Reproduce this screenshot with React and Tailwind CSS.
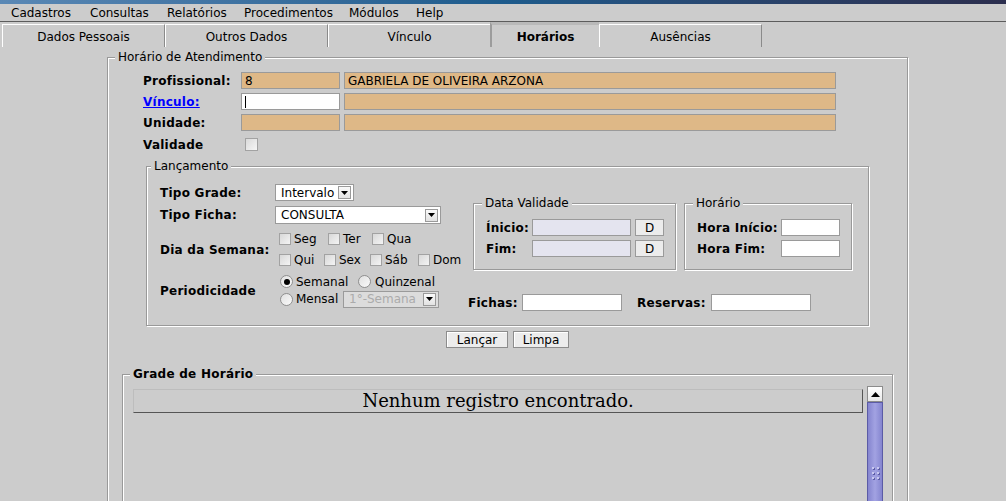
import React from "react";

const Etched = ({ className = "", legend, legendBold, legendLeft = "left-[7px]", children }) => (
  <div className={"relative border border-[#999999] shadow-[inset_1px_1px_0_#ffffff,1px_1px_0_#ffffff] " + className}>
    {legend && (
      <span className={"absolute top-[-8px] px-[3px] bg-[#cccccc] leading-[14px] whitespace-nowrap " + legendLeft + (legendBold ? " font-bold tracking-[0.25px]" : "")}>
        {legend}
      </span>
    )}
    {children}
  </div>
);

const Tan = ({ w, children }) => (
  <div className={"h-[17px] bg-[#deb887] border border-[#9a9a9a] flex items-center pl-[3px] " + w}>{children}</div>
);

const Field = ({ w, bg = "bg-white", children }) => (
  <div className={"h-[17px] border border-[#9a9a9a] flex items-center pl-[3px] " + w + " " + bg}>{children}</div>
);

const Check = () => (
  <div className="w-[12px] h-[12px] border border-[#a2a2a2] bg-gradient-to-br from-[#d8d8d8] to-[#f4f4f4] shrink-0" />
);

const Radio = ({ on }) => (
  <div className="w-[13px] h-[13px] rounded-full border border-[#8f8f8f] bg-gradient-to-br from-[#e0e0e0] to-[#fafafa] flex items-center justify-center shrink-0">
    {on && <div className="w-[6px] h-[6px] rounded-full bg-black" />}
  </div>
);

const Arrow = () => (
  <div className="w-[13px] h-[13px] border border-[#9a9a9a] bg-gradient-to-b from-[#fafafa] to-[#e2e2e2] flex items-center justify-center shrink-0">
    <svg width="7" height="4" viewBox="0 0 7 4"><path d="M0 0H7L3.5 4Z" fill="#000" /></svg>
  </div>
);

const Combo = ({ w, h = "h-[17px]", text, disabled }) => (
  <div className={"border border-[#9a9a9a] flex items-center justify-between pl-[5px] pr-[2px] " + w + " " + h + (disabled ? " bg-[#dcdcdc] text-[#ababab]" : " bg-white")}>
    <span>{text}</span>
    <Arrow />
  </div>
);

const CB = ({ w, label }) => (
  <div className={"flex items-center " + w}>
    <Check />
    <span className="ml-[3px]">{label}</span>
  </div>
);

const Btn = ({ w, children }) => (
  <div className={"h-[17px] border border-[#8c8c8c] bg-[#ececec] shadow-[inset_1px_1px_0_#ffffff] flex items-center justify-center " + w}>{children}</div>
);

export default function App() {
  const menu = [
    ["Cadastros", "w-[79px]"],
    ["Consultas", "w-[77px]"],
    ["Relatórios", "w-[77px]"],
    ["Procedimentos", "w-[105px]"],
    ["Módulos", "w-[67px]"],
    ["Help", "w-[40px]"],
  ];
  const B = "font-bold tracking-[0.25px]";
  return (
    <div className="w-[1006px] h-[501px] overflow-hidden bg-[#cccccc] text-black font-['DejaVu_Sans',sans-serif] text-[12px] leading-[14px]">
      <div className="h-[4px] bg-gradient-to-r from-[#5a88b5] via-[#1d5b8c] to-[#2b2e4e]" />
      <div className="h-[18px] flex items-center pl-[11px] border-b border-[#5c5c5c]">
        {menu.map(([t, w]) => (
          <div key={t} className={w}>{t}</div>
        ))}
      </div>
      {/* tabs */}
      <div className="h-[25px] flex items-end pl-[2px]">
        <div className="w-[163px] h-[23px] pt-[2px] border-t border-l border-white border-r border-r-[#8a8a8a] flex items-center justify-center">Dados Pessoais</div>
        <div className="w-[163px] h-[23px] pt-[2px] border-t border-l border-white border-r border-r-[#8a8a8a] flex items-center justify-center">Outros Dados</div>
        <div className="w-[162px] h-[23px] pt-[2px] border-t border-l border-white flex items-center justify-center">Vínculo</div>
        <div className="w-[109px] h-[25px] pt-[1px] border-l-2 border-l-[#9c9c9c] border-t-[3px] border-t-[#b9b9b9] flex items-center justify-center font-bold">Horários</div>
        <div className="w-[163px] h-[23px] pt-[2px] border-t border-l border-white border-r border-r-[#8a8a8a] flex items-center justify-center">Ausências</div>
      </div>

      {/* Horário de Atendimento */}
      <div className="pl-[107px] mt-[10px]">
        <Etched className="w-[801px] h-[460px] pl-[14px] pt-[14px]" legend="Horário de Atendimento">
          <div className="pl-[21px]">
            <div className="flex items-center mb-[4px]">
              <div className={"w-[98px] " + B}>Profissional:</div>
              <Tan w="w-[99px]">8</Tan>
              <div className="w-[4px]" />
              <Tan w="w-[492px]">GABRIELA DE OLIVEIRA ARZONA</Tan>
            </div>
            <div className="flex items-center mb-[4px]">
              <div className={"w-[98px] text-[#0000ff] underline " + B}>Vínculo:</div>
              <Field w="w-[99px]"><div className="w-[1px] h-[12px] bg-black" /></Field>
              <div className="w-[4px]" />
              <Tan w="w-[492px]" />
            </div>
            <div className="flex items-center">
              <div className={"w-[98px] " + B}>Unidade:</div>
              <Tan w="w-[99px]" />
              <div className="w-[4px]" />
              <Tan w="w-[492px]" />
            </div>
            <div className="flex items-center h-[13px] mt-[7px]">
              <div className={"w-[102px] " + B}>Validade</div>
              <div className="w-[13px] h-[13px] border border-[#a2a2a2] bg-gradient-to-br from-[#dadada] to-[#f6f6f6]" />
            </div>

            {/* Lançamento */}
            <Etched className="ml-[3px] mt-[15px] w-[723px] flex pb-[14px]" legend="Lançamento" legendLeft="left-[4px]">
              <div className={"w-[321px] pl-[13px] pt-[17px] " + B}>
                <div className="flex items-center h-[17px]">
                  <div className="w-[115px]">Tipo Grade:</div>
                  <div className="font-normal tracking-normal"><Combo w="w-[79px]" text="Intervalo" /></div>
                </div>
                <div className="flex items-center h-[18px] mt-[5px]">
                  <div className="w-[115px]">Tipo Ficha:</div>
                  <div className="font-normal tracking-normal"><Combo w="w-[166px]" h="h-[18px]" text="CONSULTA" /></div>
                </div>
                <div className="flex items-center mt-[7px]">
                  <div className="w-[115px]">Dia da Semana:</div>
                  <div className="font-normal tracking-normal pl-[4px] flex flex-col gap-[5px]">
                    <div className="flex h-[16px] items-center">
                      <CB w="w-[49px]" label="Seg" />
                      <CB w="w-[44px]" label="Ter" />
                      <CB w="w-[48px]" label="Qua" />
                    </div>
                    <div className="flex h-[16px] items-center">
                      <CB w="w-[45px]" label="Qui" />
                      <CB w="w-[46px]" label="Sex" />
                      <CB w="w-[48px]" label="Sáb" />
                      <CB w="w-[48px]" label="Dom" />
                    </div>
                  </div>
                </div>
                <div className="flex items-center mt-[5px]">
                  <div className="w-[115px]">Periodicidade</div>
                  <div className="font-normal tracking-normal pl-[5px] flex flex-col">
                    <div className="flex h-[17px] items-center">
                      <div className="flex items-center w-[78px]"><Radio on /><span className="ml-[3px]">Semanal</span></div>
                      <div className="flex items-center"><Radio /><span className="ml-[4px]">Quinzenal</span></div>
                    </div>
                    <div className="flex h-[18px] items-center">
                      <div className="flex items-center w-[63px]"><Radio /><span className="ml-[3px]">Mensal</span></div>
                      <Combo w="w-[96px]" text="1°-Semana" disabled />
                    </div>
                  </div>
                </div>
              </div>

              <div className="w-[400px]">
                <div className="flex mt-[36px] ml-[5px]">
                  <Etched className="w-[203px] pt-[15px] pb-[12px] pl-[12px]" legend="Data Validade" legendLeft="left-[8px]">
                    <div className="flex items-center h-[17px] mb-[4px]">
                      <div className={"w-[46px] " + B}>Ínicio:</div>
                      <Field w="w-[99px]" bg="bg-[#e4e4ef]" />
                      <div className="ml-[4px] w-[29px] h-[17px] border border-[#9a9a9a] bg-[#ececec] flex items-center justify-center">D</div>
                    </div>
                    <div className="flex items-center h-[17px]">
                      <div className={"w-[46px] " + B}>Fim:</div>
                      <Field w="w-[99px]" bg="bg-[#e4e4ef]" />
                      <div className="ml-[4px] w-[29px] h-[17px] border border-[#9a9a9a] bg-[#ececec] flex items-center justify-center">D</div>
                    </div>
                  </Etched>
                  <Etched className="ml-[8px] w-[168px] pt-[15px] pb-[12px] pl-[12px]" legend="Horário" legendLeft="left-[8px]">
                    <div className="flex items-center h-[17px] mb-[4px]">
                      <div className={"w-[84px] " + B}>Hora Início:</div>
                      <Field w="w-[59px]" />
                    </div>
                    <div className="flex items-center h-[17px]">
                      <div className={"w-[84px] " + B}>Hora Fim:</div>
                      <Field w="w-[59px]" />
                    </div>
                  </Etched>
                </div>
                <div className="flex items-center h-[17px] mt-[24px]">
                  <div className={"w-[54px] " + B}>Fichas:</div>
                  <Field w="w-[100px]" />
                  <div className={"w-[74px] ml-[15px] " + B}>Reservas:</div>
                  <Field w="w-[100px]" />
                </div>
              </div>
            </Etched>

            <div className="flex mt-[5px] ml-[303px] gap-[5px]">
              <Btn w="w-[62px]">Lançar</Btn>
              <Btn w="w-[56px]">Limpa</Btn>
            </div>
          </div>

          {/* Grade de Horário */}
          <Etched className="mt-[26px] w-[771px] h-[200px] pt-[11px] pl-[10px] flex" legend="Grade de Horário" legendBold>
            <div className="w-[730px] mt-[3px] h-[24px] border-t border-l border-[#bdbdbd] border-b border-r border-b-[#555555] border-r-[#555555] flex items-center justify-center font-['DejaVu_Serif',serif] text-[18px]">
              Nenhum registro encontrado.
            </div>
            <div className="ml-[4px] w-[16px] flex flex-col">
              <div className="h-[16px] border border-[#8c8c8c] bg-gradient-to-b from-white to-[#e8e8e8] flex items-center justify-center">
                <svg width="9" height="5" viewBox="0 0 9 5"><path d="M0 5H9L4.5 0Z" fill="#000" /></svg>
              </div>
              <div className="h-[120px] border border-[#5b5ba6] bg-gradient-to-r from-[#8585cf] via-[#a2a2e2] to-[#8585cf] flex flex-col items-center pt-[64px]">
                <div className="grid grid-cols-2 gap-x-[3px] gap-y-[3px]">
                  {Array.from({ length: 6 }).map((_, i) => (
                    <div key={i} className="w-[2px] h-[2px] bg-[#c8c8f0] shadow-[1px_1px_0_#5b5ba6]" />
                  ))}
                </div>
              </div>
            </div>
          </Etched>
        </Etched>
      </div>
    </div>
  );
}
